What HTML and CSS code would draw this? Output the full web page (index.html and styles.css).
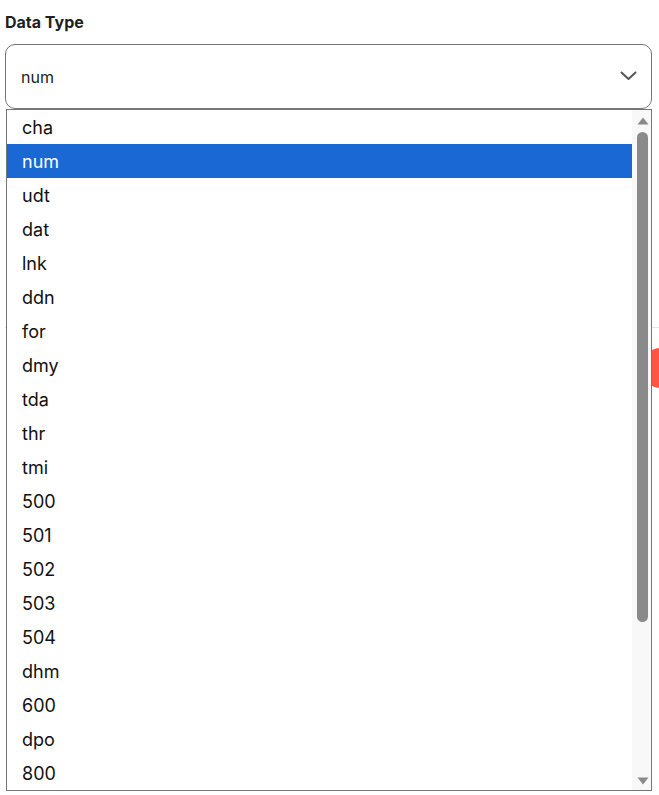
FILE: index.html
```html
<!DOCTYPE html>
<html>
<head>
<meta charset="utf-8">
<link rel="stylesheet" href="styles.css">
</head>
<body>
<div class="page">
  <div class="field">
    <label class="label">Data Type</label>
    <div class="select">
      <span class="value">num</span>
      <svg class="chevron" width="17" height="10" viewBox="0 0 17 10"><path d="M1.5 1.5 L8.5 8 L15.5 1.5" fill="none" stroke="#555" stroke-width="2" stroke-linecap="round" stroke-linejoin="round"/></svg>
    </div>
    <div class="list">
      <ul class="options">
        <li>cha</li>
        <li class="active">num</li>
        <li>udt</li>
        <li>dat</li>
        <li>lnk</li>
        <li>ddn</li>
        <li>for</li>
        <li>dmy</li>
        <li>tda</li>
        <li>thr</li>
        <li>tmi</li>
        <li>500</li>
        <li>501</li>
        <li>502</li>
        <li>503</li>
        <li>504</li>
        <li>dhm</li>
        <li>600</li>
        <li>dpo</li>
        <li>800</li>
      </ul>
      <div class="scrollbar">
        <svg class="arrow" width="12" height="8" viewBox="0 0 12 8"><path d="M6 0.5 L11.5 7.5 L0.5 7.5 Z" fill="#8a8a8a"/></svg>
        <div class="thumb-area"><div class="thumb"></div></div>
        <svg class="arrow" width="12" height="8" viewBox="0 0 12 8"><path d="M0.5 0.5 L11.5 0.5 L6 7.5 Z" fill="#8a8a8a"/></svg>
      </div>
    </div>
  </div>
  <div class="behind">
    <div class="badge-row"><span class="badge"></span></div>
  </div>
</div>
</body>
</html>
```
FILE: styles.css
```css
html, body {
  margin: 0;
  padding: 0;
  background: #ffffff;
  overflow: hidden;
}
body {
  font-family: Inter, "Noto Sans", sans-serif;
  width: 659px;
  height: 795px;
}
.page {
  position: relative;
  padding: 11px 0 0 5px;
}
.field {
  display: flex;
  flex-direction: column;
  width: 647px;
}
.label {
  font-size: 16px;
  line-height: 22px;
  font-weight: 700;
  color: #1f1f1f;
}
.select {
  margin-top: 11px;
  height: 65px;
  box-sizing: border-box;
  border: 1px solid #767676;
  border-radius: 10px;
  display: flex;
  align-items: center;
  justify-content: space-between;
  padding: 0 14px 0 15px;
}
.value {
  font-size: 16px;
  color: #222;
}
.chevron {
  display: block;
  margin-top: -2px;
}
.list {
  position: absolute;
  top: 109px;
  left: 6px;
  width: 646px;
  height: 682px;
  box-sizing: border-box;
  border: 1px solid #767676;
  background: #ffffff;
  display: flex;
  z-index: 2;
}
.options {
  list-style: none;
  margin: 0;
  padding: 0;
  flex: 1;
}
.options li {
  height: 34px;
  line-height: 35px;
  padding-left: 15px;
  font-size: 18px;
  color: #111;
}
.options li.active {
  background: #1a68d4;
  color: #ffffff;
}
.scrollbar {
  width: 19px;
  background: #f8f8f8;
  display: flex;
  flex-direction: column;
  align-items: center;
  padding: 7px 0 5px 2px;
  box-sizing: border-box;
}
.arrow {
  display: block;
  flex: none;
}
.thumb-area {
  flex: 1;
  width: 100%;
  display: flex;
  justify-content: center;
  padding: 7px 0 0 0;
}
.thumb {
  width: 11px;
  height: 490px;
  background: #8a8a8a;
  border-radius: 6px;
}
.behind {
  margin-top: 218px;
  border-top: 1px solid #e6e6e6;
  overflow: hidden;
}
.badge-row {
  display: flex;
  justify-content: flex-end;
  padding-top: 20px;
}
.badge {
  flex: none;
  width: 40px;
  height: 40px;
  border-radius: 50%;
  background: #ff5443;
  margin-right: -22px;
}
```
